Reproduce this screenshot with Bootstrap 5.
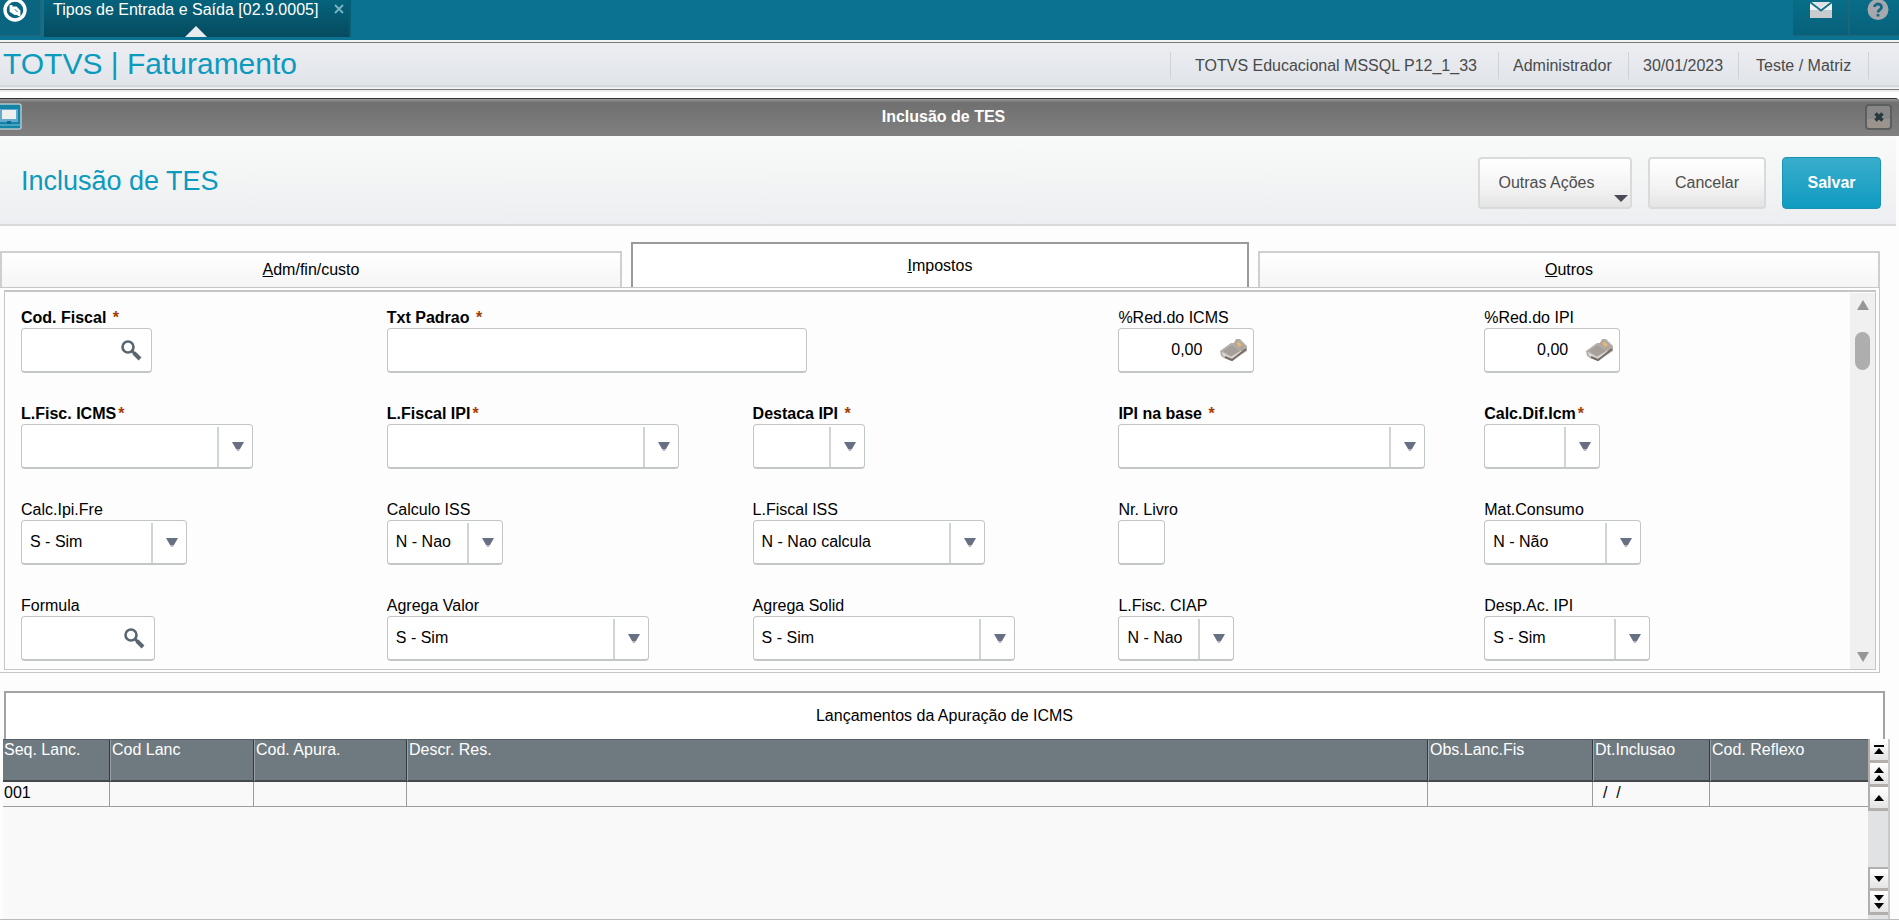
<!DOCTYPE html>
<html lang="pt-BR">
<head>
<meta charset="utf-8">
<meta name="viewport" content="width=device-width, initial-scale=1">
<title>TOTVS | Faturamento</title>
<link rel="stylesheet" href="https://cdn.jsdelivr.net/npm/bootstrap@5.3.0/dist/css/bootstrap.min.css">
<style>
  body { font-family: "Liberation Sans", Arial, sans-serif; font-size: 16px; line-height: 20px; color: #000; background: #fdfdfd; }
  button { font-size: 16px; line-height: 20px; }
  .cyan { color: #0c9abe; }

  /* application bar */
  .app-bar { height: 40px; background: #0b7391; }
  .home-tile { width: 42px; height: 36px; background: #0a6680; border: 0 solid #24657a; border-width: 0 2px 1px 0; padding: 0 0 0 2px; margin-right: 2px; display: flex; align-items: flex-start; }
  .app-tab { height: 37px; width: 307px; padding: 0 5px 0 9px; background: linear-gradient(#05637c, #064b5f); border-right: 2px solid #075e75; }
  .app-tab a { color: #fff; text-decoration: none; line-height: 20px; }
  .app-tab .close-x { border: 0; background: none; padding: 4px 0 0; line-height: 0; }
  .app-tab .pointer { left: 141px; bottom: 0; border: 11px solid transparent; border-top: 0; border-bottom-color: #e9ecef; }
  .tool-tile { height: 36px; width: 57px; padding: 1px 0 0; background: linear-gradient(#086d88, #07617a); border: 0 solid #1f6478; border-width: 0 2px 1px 0; display: flex; justify-content: center; align-items: flex-start; }
  .tool-tile:last-child { width: 49px; border-right: 0; padding: 0 0 0 7px; }

  /* module strip */
  .module-strip { height: 52px; border-top: 2px solid #f2f2f2; border-bottom: 2px solid #eee; }
  .module-strip > div { height: 48px; border: 1px solid #777; border-width: 1px 0; background: linear-gradient(#eceef2, #e1e4e9 42px, #c9cdd0 43px, #f6f6f6 45px); padding-bottom: 4px; }
  .module-strip h1 { font-size: 30px; line-height: 40px; margin: 0; padding-left: 3px; }
  .info { list-style: none; color: #4a4a4a; margin: 2px 0 0; padding: 0 30px 0 0; }
  .info li { height: 27px; line-height: 27px; border-left: 1px solid #cfd2d6; padding-left: 14px; }
  .info li:nth-child(1) { min-width: 328px; padding-left: 24px; }
  .info li:nth-child(2) { min-width: 130px; }
  .info li:nth-child(3) { min-width: 110px; }
  .info li:nth-child(4) { min-width: 131px; padding-left: 17px; border-right: 1px solid #cfd2d6; }

  /* window */
  .win-title { height: 38px; margin-top: 6px; border-top: 1px solid #333; background: linear-gradient(#949494 0 1px, #7f7f7f 2px, #707070 4px, #808080); color: #fff; font-weight: bold; padding: 0 7px 2px 0; border-radius: 0 4px 0 0; }
  .win-title h2 { font-size: 16px; line-height: 20px; margin: 0; font-weight: bold; }
  .win-close { width: 27px; height: 26px; border: 2px solid #5c5f5f; border-radius: 4px; background: linear-gradient(#888 60%, #9a948c 60%); padding: 0; line-height: 0; }
  .win-head { height: 90px; margin-right: 3px; padding: 21px 15px 16px 21px; background: linear-gradient(#f9fafa, #f4f5f5 40%, #eceef1); border-bottom: 2px solid #d8dadb; }
  .win-head h3 { font-size: 27px; line-height: 32px; margin: 8px 0 0; font-weight: normal; }
  .act { height: 52px; border: 2px solid #d9dada; border-radius: 4px; background: linear-gradient(#fff, #f3f3f3 60%, #e4e4e4); color: #4d4d4d; padding: 0; }
  .act-menu { width: 154px; padding-right: 17px; }
  .act-menu i { right: 2px; bottom: 5px; border: 7px solid transparent; border-bottom: 0; border-top-color: #4b4953; }
  .act-cancel { width: 118px; }
  .act-save { width: 99px; color: #fff; font-weight: bold; border: 1px solid #1893b5; background: linear-gradient(#3aadcc, #0f9bc1); }

  /* folder tabs */
  .folders { margin: 16px 19px 0 0; gap: 9px; }
  .folder { flex: 1 1 8px; height: 36px; border: 2px solid #cfcfcf; border-bottom: 0; background: linear-gradient(#fff, #f5f5f5); padding: 0; color: #000; }
  .folder.active { flex-basis: 4px; height: 45px; border-color: #9a9a9a; background: #fff; }

  .pane { margin-right: 19px; border: 1px solid #c4c6c7; border-left: 0; padding: 2px 3px 2px 4px; }
  .pane-in { border: 1px solid #c4c6c7; border-width: 2px 1px 1px; }
  .fields { display: grid; grid-template-columns: repeat(5, minmax(0, 1fr)); row-gap: 30px; padding: 15px 0 8px 16px; }
  .fields label { display: block; line-height: 21px; }
  .fields label.req { font-weight: bold; }
  .req span { color: #a63c00; font-weight: bold; margin-left: 2px; }
  .box { display: flex; height: 45px; border: 1px solid #c3c6c8; border-bottom-width: 2px; border-radius: 4px; background: #fff; padding: 0 8px; width: var(--w); align-items: center; color: #000; }
  input.box { display: block; }
  .box input { border: 0; outline: 0; background: none; padding: 0; min-width: 0; flex: 1; color: #000; }
  .box button { border: 0; background: none; padding: 0; line-height: 0; }
  .box.lookup { padding-right: 9px; }
  .box.amount { padding-right: 5px; }
  .box.amount input { text-align: right; }
  .box.amount button { margin-left: 18px; }
  select.box { appearance: none; display: block;
    background: url("data:image/svg+xml,%3Csvg xmlns='http://www.w3.org/2000/svg' width='12' height='9'%3E%3Cpath d='M0 0h12L8 7H4z' fill='%23677082'/%3E%3Cpath d='M4 7h4l-1 2H5z' fill='%23b4b9c2'/%3E%3C/svg%3E") right 8px center no-repeat,
      linear-gradient(#cfd4d5, #cfd4d5) right 33px top 2px / 2px 100% no-repeat #fff; }

  .vbar { width: 25px; background: #f0f0f0; margin-top: 1px; padding: 7px 0; }
  .vbar button { border: 0; background: none; padding: 0; line-height: 0; }
  .vbar .thumb { width: 15px; height: 38px; border-radius: 8px; background: #aeaeae; margin-top: 22px; }

  /* launches grid */
  .grid-title { margin: 18px 14px 0 4px; height: 48px; border: 2px solid #a2a3a3; border-bottom: 0; background: #fff; line-height: 45px; font-size: 16px; font-weight: normal; }
  .grid-zone { margin: 0 9px 0 3px; background: #f9f9f9; border-right: 2px solid #c9c9c9; }
  .launches { table-layout: fixed; width: 100%; border-collapse: separate; border-spacing: 0; }
  .launches th { height: 43px; background: #6e7a80; color: #fff; font-weight: normal; vertical-align: top; padding: 0 0 0 1px; border: 1px solid #555e62; border-width: 1px 1px 2px 0; border-bottom-color: #43484b; border-right-color: #33393c; white-space: nowrap; }
  .launches th + th { border-left: 1px solid #9aa2a6; }
  .launches td { height: 25px; padding: 0 0 3px 1px; border: 1px solid #9c9c9c; border-width: 0 1px 1px 0; white-space: pre; }
  .launches th:last-child, .launches td:last-child { border-right: 0; }
  .steps { width: 20px; background: #e1e2e4; }
  .steps button { height: 24px; width: 100%; padding: 0; line-height: 0; border: 0 solid #b2afad; border-width: 0 0 3px 2px; background: linear-gradient(#fff, #e4e4e5); }
  .steps button.mt-auto { border-top-width: 2px; }
  .foot-line { height: 1px; background: #bbb; }
</style>
</head>
<body>
<svg class="d-none" aria-hidden="true">
  <symbol id="i-lens" viewBox="0 0 22 22"><circle cx="8" cy="8" r="5.500" fill="none" stroke="#596570" stroke-width="2.600"/><path d="M12 12l3 3" stroke="#596570" stroke-width="3"/><path d="M14 14l6 6" stroke="#596570" stroke-width="4"/></symbol>
  <symbol id="i-calc" viewBox="0 0 28 24"><path d="M0 13L11 5l3 0 2-4h4l7 7v5L16 20l-4 3-8-3-3-2z" fill="#b3aeab"/><path d="M3 13l9-6 8 6-9 5z" fill="#a59f9a"/><path d="M2 14l9 5 11-7v3l-10 6-9-3z" fill="#dad7d4"/><path d="M13 6l4-4 8 6-3 5z" fill="#b3a699"/><path d="M16 5l3-1 3 3-3 2z" fill="#e0b77c"/><path d="M5 19l7 3 4-3 10-8" fill="none" stroke="#786c67" stroke-width="2"/></symbol>
</svg>
<div class="d-flex flex-column min-vh-100">
  <nav class="app-bar d-flex align-items-start" aria-label="Programas">
    <button class="home-tile" type="button" aria-label="Início">
      <svg width="26" height="24" viewBox="0 0 26 24"><circle cx="13" cy="10" r="10" fill="none" stroke="#fff" stroke-width="3.400"/><path d="M9 5v6l4 2.500h4M17 16v-5l-3-3h-4" fill="none" stroke="#fff" stroke-width="2.800"/><path d="M10 7l7 7h-4l-4-4z" fill="#fff"/></svg>
    </button>
    <div class="app-tab position-relative d-flex justify-content-between align-items-start">
      <a href="#">Tipos de Entrada e Saída [02.9.0005]</a>
      <button class="close-x" type="button" aria-label="Fechar"><svg width="10" height="10" viewBox="0 0 10 10"><path d="M1 1l8 8M9 1L1 9" stroke="#79b4c6" stroke-width="1.800"/></svg></button>
      <span class="pointer position-absolute"></span>
    </div>
    <div class="ms-auto d-flex">
      <button class="tool-tile" type="button" aria-label="Mensagens"><svg width="22" height="17" viewBox="0 0 22 17"><path d="M0 1h22v9H0z" fill="#f0f1f2"/><path d="M0 9h22v8H0z" fill="#c8cccf"/><path d="M0 1l11 8.500L22 1" fill="none" stroke="#17738b" stroke-width="2"/><path d="M3 1h16l-8 6z" fill="#dfe2e4"/></svg></button>
      <button class="tool-tile" type="button" aria-label="Ajuda"><svg width="22" height="20" viewBox="0 0 22 20"><circle cx="11" cy="9.500" r="10.500" fill="#a5a9ad"/><path d="M7.500 7a3.500 3 0 1 1 5.500 2.500c-1.500 1-2 1.300-2 3M11 14v2.500" fill="none" stroke="#176783" stroke-width="2.800"/></svg></button>
    </div>
  </nav>

  <header class="module-strip">
    <div class="d-flex justify-content-between align-items-center">
      <h1 class="cyan fw-normal">TOTVS | Faturamento</h1>
      <ul class="info d-flex">
        <li>TOTVS Educacional MSSQL P12_1_33</li><li>Administrador</li><li>30/01/2023</li><li>Teste / Matriz</li>
      </ul>
    </div>
  </header>

  <main class="d-flex flex-column flex-grow-1">
    <div class="win-title d-flex align-items-center">
      <svg width="22" height="27" viewBox="0 0 22 27"><rect x="-4" y="1" width="25" height="25" rx="2" fill="#1184a7" stroke="#b3c6cc" stroke-width="1.500"/><rect x="0" y="6" width="18" height="13" fill="#66a9cd"/><rect x="2" y="7" width="14" height="9" fill="#eeefef"/><path d="M0 21h20v2H0z" fill="#4aa2c3"/><path d="M7 18h4v3H7z" fill="#0b6b93"/></svg>
      <h2 class="flex-fill text-center">Inclusão de TES</h2>
      <button class="win-close" type="button" aria-label="Fechar janela"><svg width="10" height="10" viewBox="0 0 10 10"><path d="M1.500 1.500l7 7M8.500 1.500l-7 7" stroke="#27383f" stroke-width="3.500"/></svg></button>
    </div>

    <div class="win-head d-flex justify-content-between align-items-start">
      <h3 class="cyan">Inclusão de TES</h3>
      <div class="d-flex gap-3">
        <button class="act act-menu position-relative" type="button">Outras Ações<i class="position-absolute"></i></button>
        <button class="act act-cancel" type="button">Cancelar</button>
        <button class="act act-save" type="button">Salvar</button>
      </div>
    </div>

    <div class="folders d-flex align-items-end" role="tablist">
      <button class="folder" type="button" role="tab"><u>A</u>dm/fin/custo</button>
      <button class="folder active" type="button" role="tab" aria-selected="true"><u>I</u>mpostos</button>
      <button class="folder" type="button" role="tab"><u>O</u>utros</button>
    </div>

    <div class="pane">
      <div class="pane-in d-flex">
        <form class="fields flex-fill">
          <div><label class="req" for="codFiscal">Cod. Fiscal <span>*</span></label>
            <div class="box lookup" style="--w:131px"><input id="codFiscal" type="text"><button type="button" aria-label="Pesquisar"><svg width="22" height="22"><use href="#i-lens"/></svg></button></div></div>
          <div><label class="req" for="txtPadrao">Txt Padrao <span>*</span></label>
            <input class="box" id="txtPadrao" type="text" style="--w:420px"></div>
          <div></div>
          <div><label for="redIcms">%Red.do ICMS</label>
            <div class="box amount" style="--w:136px"><input id="redIcms" type="text" value="0,00"><button type="button" aria-label="Calculadora"><svg width="28" height="24"><use href="#i-calc"/></svg></button></div></div>
          <div><label for="redIpi">%Red.do IPI</label>
            <div class="box amount" style="--w:136px"><input id="redIpi" type="text" value="0,00"><button type="button" aria-label="Calculadora"><svg width="28" height="24"><use href="#i-calc"/></svg></button></div></div>

          <div><label class="req" for="lfIcms">L.Fisc. ICMS<span>*</span></label><select class="box" id="lfIcms" style="--w:232px"><option></option></select></div>
          <div><label class="req" for="lfIpi">L.Fiscal IPI<span>*</span></label><select class="box" id="lfIpi" style="--w:292px"><option></option></select></div>
          <div><label class="req" for="destIpi">Destaca IPI <span>*</span></label><select class="box" id="destIpi" style="--w:112px"><option></option></select></div>
          <div><label class="req" for="ipiBase">IPI na base <span>*</span></label><select class="box" id="ipiBase" style="--w:307px"><option></option></select></div>
          <div><label class="req" for="difIcm">Calc.Dif.Icm<span>*</span></label><select class="box" id="difIcm" style="--w:116px"><option></option></select></div>

          <div><label for="ipiFre">Calc.Ipi.Fre</label><select class="box" id="ipiFre" style="--w:166px"><option>S - Sim</option></select></div>
          <div><label for="calcIss">Calculo ISS</label><select class="box" id="calcIss" style="--w:116px"><option>N - Nao</option></select></div>
          <div><label for="lfIss">L.Fiscal ISS</label><select class="box" id="lfIss" style="--w:232px"><option>N - Nao calcula</option></select></div>
          <div><label for="nrLivro">Nr. Livro</label><input class="box" id="nrLivro" type="text" style="--w:47px"></div>
          <div><label for="matCons">Mat.Consumo</label><select class="box" id="matCons" style="--w:157px"><option>N - Não</option></select></div>

          <div><label for="formula">Formula</label>
            <div class="box lookup" style="--w:134px"><input id="formula" type="text"><button type="button" aria-label="Pesquisar"><svg width="22" height="22"><use href="#i-lens"/></svg></button></div></div>
          <div><label for="agValor">Agrega Valor</label><select class="box" id="agValor" style="--w:262px"><option>S - Sim</option></select></div>
          <div><label for="agSolid">Agrega Solid</label><select class="box" id="agSolid" style="--w:262px"><option>S - Sim</option></select></div>
          <div><label for="ciap">L.Fisc. CIAP</label><select class="box" id="ciap" style="--w:116px"><option>N - Nao</option></select></div>
          <div><label for="despIpi">Desp.Ac. IPI</label><select class="box" id="despIpi" style="--w:166px"><option>S - Sim</option></select></div>
        </form>
        <div class="vbar flex-shrink-0 d-flex flex-column align-items-center">
          <button type="button" aria-label="Subir"><svg width="12" height="10" viewBox="0 0 12 10"><path d="M6 0l6 10H0z" fill="#979797"/></svg></button>
          <span class="thumb"></span>
          <button class="mt-auto" type="button" aria-label="Descer"><svg width="12" height="10" viewBox="0 0 12 10"><path d="M6 10l6-10H0z" fill="#979797"/></svg></button>
        </div>
      </div>
    </div>

    <h4 class="grid-title text-center mb-0">Lançamentos da Apuração de ICMS</h4>
    <div class="grid-zone d-flex flex-grow-1">
      <div class="flex-fill">
        <table class="launches">
          <colgroup><col style="width:107px"><col style="width:144px"><col style="width:153px"><col><col style="width:165px"><col style="width:117px"><col style="width:158px"></colgroup>
          <thead><tr><th>Seq. Lanc.</th><th>Cod Lanc</th><th>Cod. Apura.</th><th>Descr. Res.</th><th>Obs.Lanc.Fis</th><th>Dt.Inclusao</th><th>Cod. Reflexo</th></tr></thead>
          <tbody><tr><td>001</td><td></td><td></td><td></td><td></td><td>  /  /</td><td></td></tr></tbody>
        </table>
      </div>
      <div class="steps flex-shrink-0 d-flex flex-column">
        <button type="button" aria-label="Primeira linha"><svg width="10" height="10" viewBox="0 0 10 10"><path d="M0 0h10v2H0zM5 3l5 6H0z"/></svg></button>
        <button type="button" aria-label="Página anterior"><svg width="10" height="14" viewBox="0 0 10 14"><path d="M5 0l5 6H0zM5 8l5 6H0z"/></svg></button>
        <button type="button" aria-label="Linha anterior"><svg width="10" height="6" viewBox="0 0 10 6"><path d="M5 0l5 6H0z"/></svg></button>
        <button class="mt-auto" type="button" aria-label="Próxima linha"><svg width="10" height="6" viewBox="0 0 10 6"><path d="M5 6l5-6H0z"/></svg></button>
        <button class="mb-1" type="button" aria-label="Próxima página"><svg width="10" height="14" viewBox="0 0 10 14"><path d="M5 6l5-6H0zM5 14l5-6H0z"/></svg></button>
      </div>
    </div>
    <div class="foot-line"></div>
  </main>
</div>
<script src="https://cdn.jsdelivr.net/npm/bootstrap@5.3.0/dist/js/bootstrap.bundle.min.js"></script>
</body>
</html>
